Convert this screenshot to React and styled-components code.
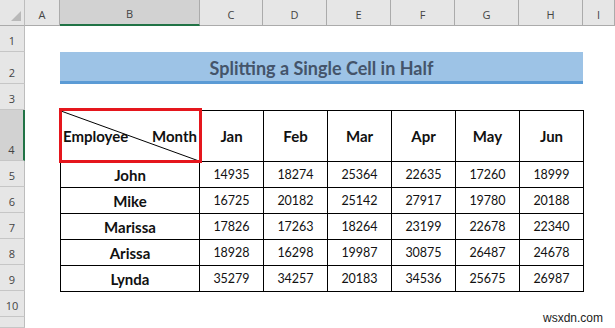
import React from 'react'
import styled, { createGlobalStyle } from 'styled-components'

const GlobalStyle = createGlobalStyle`
  html, body {
    margin: 0;
    padding: 0;
    background: #fff;
  }
  body {
    font-family: Lato, "Open Sans", sans-serif;
  }
`

const Sheet = styled.div`
  position: relative;
  width: 615px;
  height: 328px;
  overflow: hidden;
  display: grid;
  grid-template-columns: 25px 35px 140px 63px 64px 64px 64px 64px 64px 1fr;
  grid-template-rows: 26px 26px 32px 26px 51px repeat(5, 26px) 26px 1fr;
  background: #fff;
`

const Corner = styled.div`
  grid-row: 1;
  grid-column: 1;
  background: #e6e6e6;
  border-right: 1px solid #bdbdbd;
  border-bottom: 1px solid #ababab;
  display: flex;
  justify-content: flex-end;
  align-items: flex-end;
  padding: 0 3px 4px 0;
  box-sizing: border-box;
`

const ColHeader = styled.div`
  grid-row: 1;
  grid-column: ${(p) => p.col};
  background: ${(p) => (p.selected ? '#d2d2d2' : '#e6e6e6')};
  border-right: 1px solid #ababab;
  border-bottom: ${(p) => (p.selected ? '2px solid #217346' : '1px solid #ababab')};
  box-sizing: border-box;
  display: flex;
  align-items: center;
  justify-content: center;
  padding-top: 3px;
  font-family: "Open Sans", sans-serif;
  font-size: 11px;
  color: #444;
`

const RowHeader = styled.div`
  grid-row: ${(p) => p.row};
  grid-column: 1;
  background: ${(p) => (p.selected ? '#d2d2d2' : '#e6e6e6')};
  border-bottom: 1px solid #c6c6c6;
  border-right: ${(p) => (p.selected ? '2px solid #217346' : '1px solid #bdbdbd')};
  box-sizing: border-box;
  display: flex;
  align-items: flex-end;
  justify-content: center;
  padding-bottom: 3px;
  font-family: "Open Sans", sans-serif;
  font-size: 11px;
  color: #444;
`

const TitleBar = styled.div`
  grid-row: 3;
  grid-column: 3 / 10;
  background: #9dc3e6;
  border-bottom: 3px solid #5b9bd5;
  box-sizing: border-box;
  display: flex;
  align-items: center;
  justify-content: center;
  padding-top: 2px;
  font-size: 18px;
  font-weight: 700;
  color: #44546a;
`

const Table = styled.div`
  grid-row: 5 / 11;
  grid-column: 3 / 10;
  align-self: start;
  justify-self: start;
  display: grid;
  grid-template-columns: 138px repeat(6, 63px);
  grid-template-rows: 50px repeat(5, 25px);
  gap: 1px;
  padding: 1px;
  background: #000;
`

const Cell = styled.div`
  background: #fff;
  display: flex;
  align-items: center;
  justify-content: center;
  font-size: ${(p) => (p.bold ? '15px' : '12.5px')};
  font-weight: ${(p) => (p.bold ? 700 : 400)};
  color: #111;
`

const SplitCell = styled.div`
  position: relative;
  background: #fff;
  display: flex;
  align-items: center;
  justify-content: space-between;
  padding: 0 2px 0 2px;
  font-size: 15px;
  font-weight: 700;
  color: #111;
`

const Diagonal = styled.svg`
  position: absolute;
  inset: 0;
  width: 100%;
  height: 100%;
`

const Highlight = styled.div`
  position: absolute;
  top: -3px;
  left: -2px;
  right: -3px;
  bottom: -2px;
  border: 3px solid #e5161d;
  pointer-events: none;
`

const Watermark = styled.div`
  position: absolute;
  right: 12px;
  bottom: 3px;
  font-family: "Liberation Sans", Arial, sans-serif;
  font-size: 12px;
  color: #222;
`

const columns = ['A', 'B', 'C', 'D', 'E', 'F', 'G', 'H', 'I']
const months = ['Jan', 'Feb', 'Mar', 'Apr', 'May', 'Jun']

const data = [
  ['John', 14935, 18274, 25364, 22635, 17260, 18999],
  ['Mike', 16725, 20182, 25142, 27917, 19780, 20188],
  ['Marissa', 17826, 17263, 18264, 23199, 22678, 22340],
  ['Arissa', 18928, 16298, 19987, 30875, 26487, 24678],
  ['Lynda', 35279, 34257, 20183, 34536, 25675, 26987],
]

const App = () => {
  return (
    <>
      <GlobalStyle />
      <Sheet>
        <Corner>
          <svg width="10" height="10" viewBox="0 0 10 10">
            <polygon points="10,0 10,10 0,10" fill="#b9b9b9" />
          </svg>
        </Corner>
        {columns.map((c, i) => (
          <ColHeader key={c} col={i + 2} selected={c === 'B'}>
            {c}
          </ColHeader>
        ))}
        {Array.from({ length: 11 }, (_, i) => (
          <RowHeader key={i} row={i + 2} selected={i + 1 === 4}>
            {i < 10 ? i + 1 : ''}
          </RowHeader>
        ))}

        <TitleBar>Splitting a Single Cell in Half</TitleBar>

        <Table>
          <SplitCell>
            <Diagonal preserveAspectRatio="none" viewBox="0 0 100 100">
              <line x1="0" y1="0" x2="100" y2="100" stroke="#000" strokeWidth="1" vectorEffect="non-scaling-stroke" />
            </Diagonal>
            <span>Employee</span>
            <span>Month</span>
            <Highlight />
          </SplitCell>
          {months.map((m) => (
            <Cell key={m} bold>
              {m}
            </Cell>
          ))}
          {data.map((row) =>
            row.map((v, j) => (
              <Cell key={row[0] + j} bold={j === 0}>
                {v}
              </Cell>
            ))
          )}
        </Table>

        <Watermark>wsxdn.com</Watermark>
      </Sheet>
    </>
  )
}

export default App
